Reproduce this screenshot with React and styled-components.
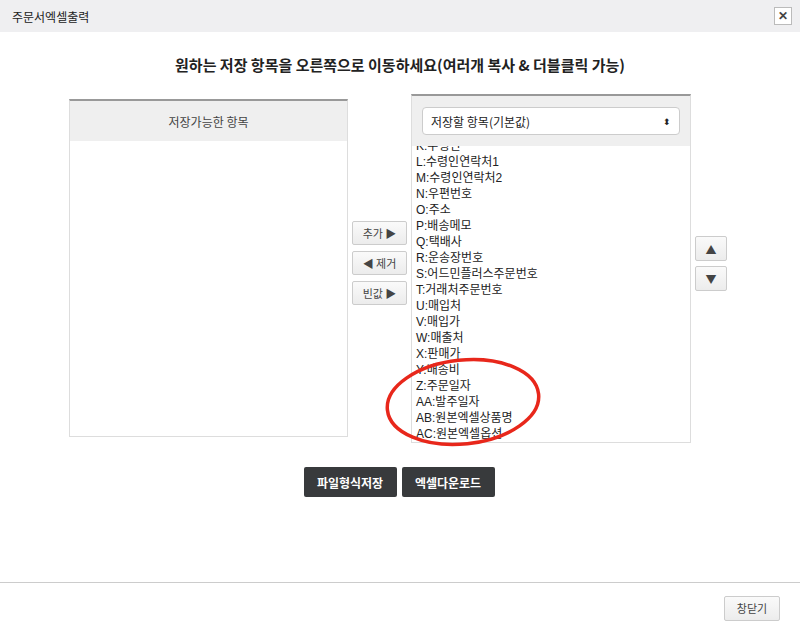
import React, { useEffect, useRef } from 'react';
import styled, { createGlobalStyle } from 'styled-components';

const Global = createGlobalStyle`
  body { margin: 0; font-family: "Noto Sans CJK KR", "Noto Sans", sans-serif; background: #fff; }
`;

const Page = styled.div`
  width: 800px;
  height: 635px;
  position: relative;
  display: flex;
  flex-direction: column;
  overflow: hidden;
`;

const TitleBar = styled.div`
  height: 32px;
  background: #efeff1;
  display: flex;
  align-items: center;
  justify-content: space-between;
  padding: 0 8px 0 12px;
  font-size: 12px;
  color: #222;
`;

const CloseX = styled.button`
  width: 18px;
  height: 18px;
  border: 1px solid #bbb;
  background: #fff;
  font-size: 12px;
  font-weight: bold;
  line-height: 14px;
  padding: 0;
  color: #444;
`;

const Heading = styled.h2`
  margin: 22px 0 0;
  text-align: center;
  font-size: 15px;
  font-weight: 700;
  color: #222;
`;

const Body = styled.div`
  display: flex;
  align-items: flex-start;
  margin: 19px 0 0 69px;
`;

const Panel = styled.div`
  width: ${p => p.$w}px;
  border: 1px solid #ddd;
  border-top: 2px solid #999;
  background: #fff;
  display: flex;
  flex-direction: column;
  margin-top: ${p => p.$top}px;
`;

const PanelHead = styled.div`
  height: ${p => p.$h}px;
  background: #efefef;
  display: flex;
  align-items: center;
  justify-content: center;
  font-size: 12px;
  color: #444;
  padding: 0 10px;
`;

const Select = styled.div`
  flex: 1;
  height: 26px;
  border: 1px solid #ccc;
  border-radius: 4px;
  background: #fff;
  display: flex;
  align-items: center;
  justify-content: space-between;
  padding: 0 8px;
  font-size: 12px;
  color: #222;
`;

const List = styled.div`
  height: ${p => p.$h}px;
  overflow-y: scroll;
  padding: 0 4px;
  font-family: "Liberation Sans", "Noto Sans CJK KR", sans-serif;
  font-size: 12px;
  color: #222;
  &::-webkit-scrollbar { width: 12px; }
  &::-webkit-scrollbar-track { background: #fafafa; border-left: 1px solid #e8e8e8; }
  &::-webkit-scrollbar-thumb { background: #c8c8c8; border-radius: 6px; border: 3px solid #fafafa; }
`;

const Item = styled.div`
  height: 16px;
  line-height: 16px;
  white-space: nowrap;
`;

const MidCol = styled.div`
  display: flex;
  flex-direction: column;
  gap: 6px;
  margin: 127px 4px 0;
`;

const SmallBtn = styled.button`
  width: ${p => p.$w}px;
  height: ${p => p.$h}px;
  border: 1px solid #ccc;
  border-radius: 2px;
  background: linear-gradient(#fafafa, #ececec);
  font-size: 11px;
  color: #444;
  font-family: "Noto Sans CJK KR", sans-serif;
  padding: 0;
`;

const SortCol = styled(MidCol)`
  margin: 142px 4px 0;
  gap: 5px;
`;

const Actions = styled.div`
  display: flex;
  justify-content: center;
  gap: 5px;
  margin: 24px 0 0 -2px;
`;

const DarkBtn = styled.button`
  width: 93px;
  height: 30px;
  background: #383a3c;
  color: #fff;
  border: none;
  border-radius: 2px;
  font-size: 12px;
  font-weight: 700;
  font-family: "Noto Sans CJK KR", sans-serif;
`;

const Footer = styled.div`
  margin-top: auto;
  height: 50px;
  border-top: 1px solid #ccc;
  display: flex;
  align-items: center;
  justify-content: flex-end;
  padding: 0 20px 2px 0;
`;

const Mark = styled.svg`
  position: absolute;
  left: 380px;
  top: 356px;
  pointer-events: none;
`;

const items = [
  'A:주문번호', 'B:주문일시', 'C:쇼핑몰', 'D:상품명', 'E:옵션', 'F:수량', 'G:판매가', 'H:주문자',
  'I:주문자연락처', 'J:주문자연락처2', 'K:수령인', 'L:수령인연락처1', 'M:수령인연락처2', 'N:우편번호',
  'O:주소', 'P:배송메모', 'Q:택배사', 'R:운송장번호', 'S:어드민플러스주문번호', 'T:거래처주문번호',
  'U:매입처', 'V:매입가', 'W:매출처', 'X:판매가', 'Y:배송비', 'Z:주문일자', 'AA:발주일자',
  'AB:원본엑셀상품명', 'AC:원본엑셀옵션', ''
];

export default function App() {
  const listRef = useRef(null);
  useEffect(() => {
    if (listRef.current) listRef.current.scrollTop = 168;
  }, []);

  return (
    <Page>
      <Global />
      <TitleBar>
        <span>주문서엑셀출력</span>
        <CloseX>✕</CloseX>
      </TitleBar>
      <Heading>원하는 저장 항목을 오른쪽으로 이동하세요(여러개 복사 &amp; 더블클릭 가능)</Heading>
      <Body>
        <Panel $w={277} $top={5}>
          <PanelHead $h={40}>저장가능한 항목</PanelHead>
          <List $h={295} />
        </Panel>
        <MidCol>
          <SmallBtn $w={55} $h={24}>추가 ▶</SmallBtn>
          <SmallBtn $w={55} $h={24}>◀ 제거</SmallBtn>
          <SmallBtn $w={55} $h={24}>빈값 ▶</SmallBtn>
        </MidCol>
        <Panel $w={278} $top={0}>
          <PanelHead $h={50}>
            <Select>
              <span>저장할 항목(기본값)</span>
              <span style={{ fontSize: 9 }}>⬍</span>
            </Select>
          </PanelHead>
          <List ref={listRef} $h={296}>
            {items.map((t, i) => <Item key={i}>{t}</Item>)}
          </List>
        </Panel>
        <SortCol>
          <SmallBtn $w={32} $h={25}>▲</SmallBtn>
          <SmallBtn $w={32} $h={25}>▼</SmallBtn>
        </SortCol>
      </Body>
      <Actions>
        <DarkBtn>파일형식저장</DarkBtn>
        <DarkBtn>엑셀다운로드</DarkBtn>
      </Actions>
      <Footer>
        <SmallBtn $w={56} $h={25}>창닫기</SmallBtn>
      </Footer>
      <Mark width="170" height="100" viewBox="0 0 170 100">
        <ellipse cx="83" cy="46" rx="76" ry="42" fill="none" stroke="#e8271b" strokeWidth="3.5" transform="rotate(-6 83 46)" />
      </Mark>
    </Page>
  );
}
